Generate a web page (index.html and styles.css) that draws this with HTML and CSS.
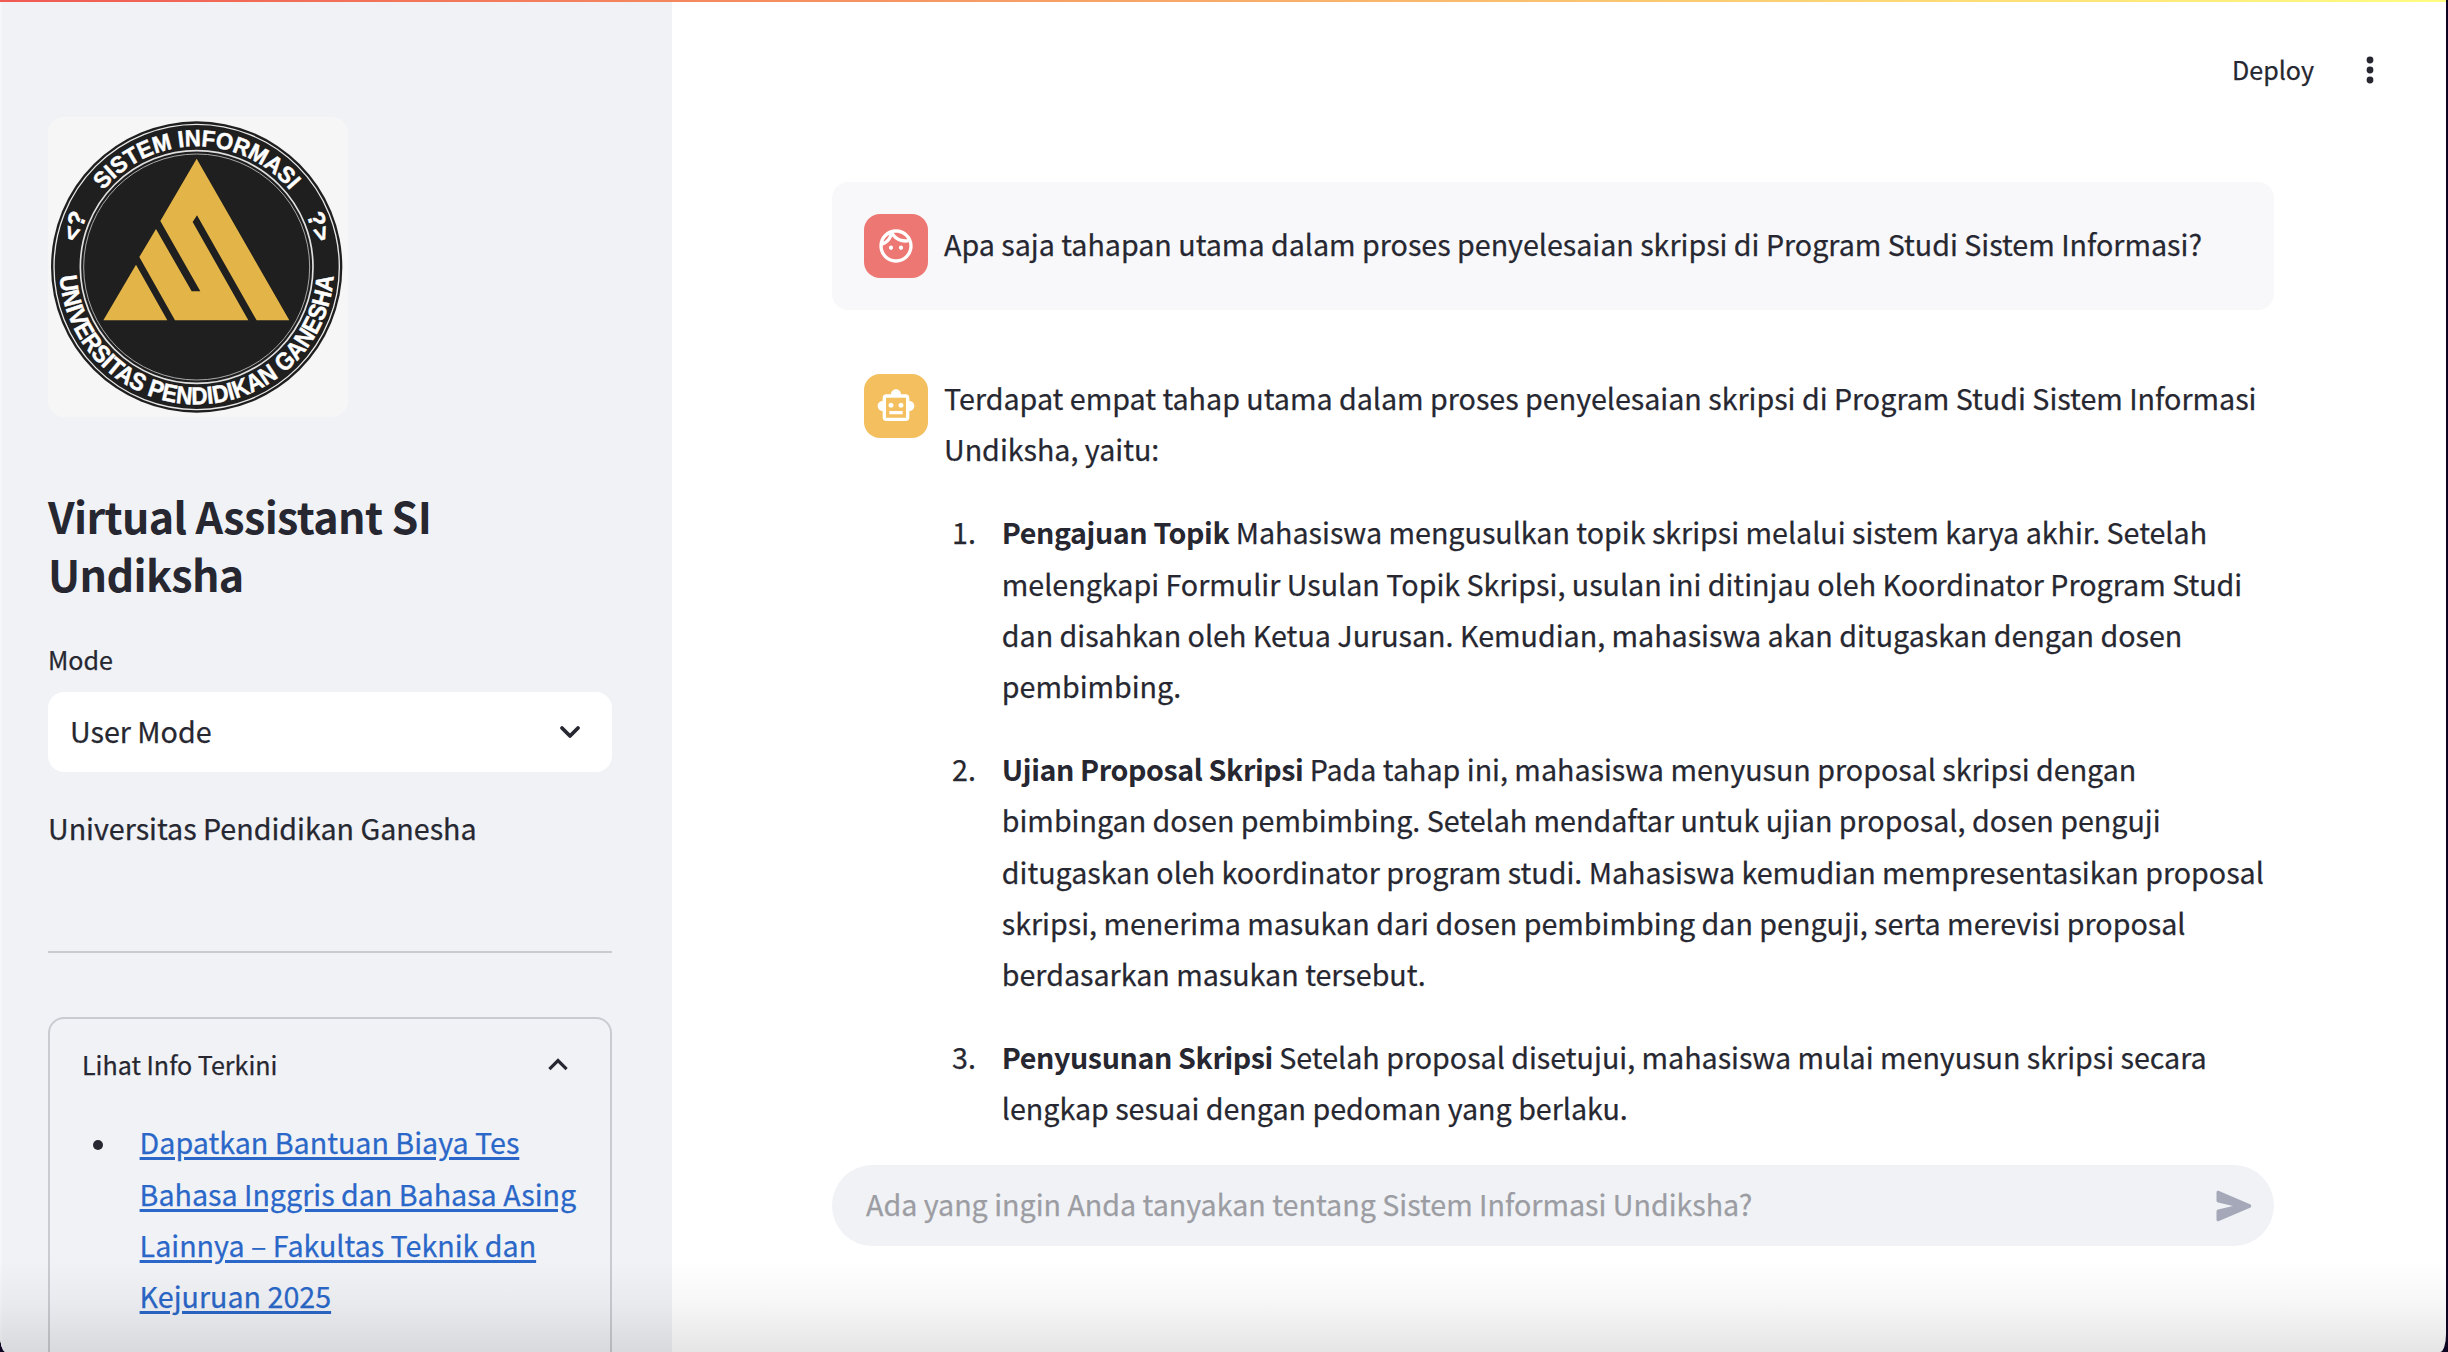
FILE: index.html
```html
<!DOCTYPE html>
<html lang="id">
<head>
<meta charset="utf-8">
<title>Virtual Assistant SI Undiksha</title>
<link rel="stylesheet" href="styles.css">
</head>
<body>
<div class="app">
  <div class="decoration"></div>
  <aside class="sidebar">
    <svg class="logo" viewBox="54 50 900 900">
      <defs>
        <path id="arc-top" d="M138 500 A362 362 0 0 1 862 500"/>
        <path id="arc-bottom" d="M88 500 A412 412 0 0 0 912 500"/>
      </defs>
      <rect x="54" y="50" width="900" height="900" fill="#f6f6f6"/>
      <circle cx="500" cy="500" r="437" fill="#1f1f1f"/>
      <circle cx="500" cy="500" r="428" fill="none" stroke="#e8e8e8" stroke-width="4"/>
      <circle cx="500" cy="500" r="349" fill="none" stroke="#e0e0e0" stroke-width="5"/>
      <circle cx="500" cy="500" r="339" fill="none" stroke="#a8a8a8" stroke-width="3"/>
      <g class="seal-text">
        <text font-size="70"><textPath href="#arc-top" startOffset="50%" text-anchor="middle" textLength="640" lengthAdjust="spacingAndGlyphs">SISTEM INFORMASI</textPath></text>
        <text font-size="74"><textPath href="#arc-bottom" startOffset="50%" text-anchor="middle" textLength="1238" lengthAdjust="spacingAndGlyphs">UNIVERSITAS PENDIDIKAN GANESHA</textPath></text>
        <text font-size="72" letter-spacing="3" text-anchor="middle" transform="rotate(-71.5 500 500)" x="502" y="138">&lt;?</text>
        <text font-size="72" letter-spacing="3" text-anchor="middle" transform="rotate(71.5 500 500)" x="502" y="138">?&gt;</text>
      </g>
      <path fill="#e3b548" d="M500 175 778 660H680L501 345 488 365 655 660H435L328 470 378 386 485 573H511L391 362ZM318 493 412 660H220Z"/>
    </svg>
    <h1 class="title">Virtual Assistant SI<br>Undiksha</h1>
    <label class="label">Mode</label>
    <div class="select">
      <span>User Mode</span>
      <svg class="select-icon" viewBox="0 0 24 16"><path d="M4 4 12 12 20 4" fill="none" stroke="#262730" stroke-width="3.8" stroke-linecap="round" stroke-linejoin="round"/></svg>
    </div>
    <p class="campus">Universitas Pendidikan Ganesha</p>
    <hr class="divider">
    <section class="expander">
      <header class="expander-head">
        <span>Lihat Info Terkini</span>
        <svg class="expander-icon" viewBox="0 0 20 13"><path d="M1.4 11.2 10 2.6 18.6 11.2" fill="none" stroke="#262730" stroke-width="3.2"/></svg>
      </header>
      <ul class="news">
        <li><a href="#">Dapatkan Bantuan Biaya Tes<br>Bahasa Inggris dan Bahasa Asing<br>Lainnya – Fakultas Teknik dan<br>Kejuruan 2025</a></li>
      </ul>
    </section>
  </aside>
  <main class="main">
    <header class="toolbar">
      <span>Deploy</span>
      <svg class="menu-icon" viewBox="0 0 8 28"><circle cx="4" cy="4" r="3.4"/><circle cx="4" cy="14" r="3.4"/><circle cx="4" cy="24" r="3.4"/></svg>
    </header>
    <div class="chat">
      <article class="message user">
        <div class="avatar avatar-user"><svg viewBox="0 0 24 24"><path d="M10.25 13c0 .69-.56 1.25-1.25 1.25S7.75 13.69 7.75 13s.56-1.25 1.25-1.25 1.25.56 1.25 1.25zM15 11.75c-.69 0-1.25.56-1.25 1.25s.56 1.25 1.25 1.25 1.25-.56 1.25-1.25-.56-1.25-1.25-1.25zm7 .25c0 5.52-4.48 10-10 10S2 17.52 2 12 6.48 2 12 2s10 4.48 10 10zM10.66 4.12C12.06 6.44 14.6 8 17.5 8c.46 0 .91-.05 1.34-.12C17.44 5.56 14.9 4 12 4c-.46 0-.91.05-1.34.12zM4.42 9.47a8.046 8.046 0 0 0 3.66-4.44 8.046 8.046 0 0 0-3.66 4.44zM20 12c0-.78-.12-1.53-.33-2.24-.7.15-1.42.24-2.17.24a10 10 0 0 1-7.76-3.69A10.016 10.016 0 0 1 4 11.86c.01.04 0 .09 0 .14 0 4.41 3.59 8 8 8s8-3.59 8-8z"/></svg></div>
        <div class="content"><p>Apa saja tahapan utama dalam proses penyelesaian skripsi di Program Studi Sistem Informasi?</p></div>
      </article>
      <article class="message">
        <div class="avatar avatar-bot"><svg viewBox="0 0 24 24"><path d="M20 9V7c0-1.1-.9-2-2-2h-3c0-1.66-1.34-3-3-3S9 3.34 9 5H6c-1.1 0-2 .9-2 2v2c-1.66 0-3 1.34-3 3s1.34 3 3 3v4c0 1.1.9 2 2 2h12c1.1 0 2-.9 2-2v-4c1.66 0 3-1.34 3-3s-1.34-3-3-3zm-2 10H6V7h12v12zm-9-6c-.83 0-1.5-.67-1.5-1.5S8.17 10 9 10s1.5.67 1.5 1.5S9.83 13 9 13zm7.5-1.5c0 .83-.67 1.5-1.5 1.5s-1.5-.67-1.5-1.5.67-1.5 1.5-1.5 1.5.67 1.5 1.5zM8 15h8v2H8v-2z"/></svg></div>
        <div class="content">
          <p>Terdapat empat tahap utama dalam proses penyelesaian skripsi di Program Studi Sistem Informasi<br>Undiksha, yaitu:</p>
          <ol class="steps">
            <li><span class="num">1.</span><div><strong>Pengajuan Topik</strong> Mahasiswa mengusulkan topik skripsi melalui sistem karya akhir. Setelah<br>melengkapi Formulir Usulan Topik Skripsi, usulan ini ditinjau oleh Koordinator Program Studi<br>dan disahkan oleh Ketua Jurusan. Kemudian, mahasiswa akan ditugaskan dengan dosen<br>pembimbing.</div></li>
            <li><span class="num">2.</span><div><strong>Ujian Proposal Skripsi</strong> Pada tahap ini, mahasiswa menyusun proposal skripsi dengan<br>bimbingan dosen pembimbing. Setelah mendaftar untuk ujian proposal, dosen penguji<br>ditugaskan oleh koordinator program studi. Mahasiswa kemudian mempresentasikan proposal<br>skripsi, menerima masukan dari dosen pembimbing dan penguji, serta merevisi proposal<br>berdasarkan masukan tersebut.</div></li>
            <li><span class="num">3.</span><div><strong>Penyusunan Skripsi</strong> Setelah proposal disetujui, mahasiswa mulai menyusun skripsi secara<br>lengkap sesuai dengan pedoman yang berlaku.</div></li>
          </ol>
        </div>
      </article>
    </div>
    <div class="composer">
      <span>Ada yang ingin Anda tanyakan tentang Sistem Informasi Undiksha?</span>
      <svg class="send-icon" viewBox="0 0 36 32"><path d="M.5 2.6C.5 1 1.6.4 3 1L34 14.2c1.700.8 1.700 2.800 0 3.600L3 31c-1.400.6-2.500 0-2.500-1.600V21.500c0-1 .6-1.700 1.600-1.900L17 16 2.100 12.400C1.100 12.200.5 11.500.5 10.500Z"/></svg>
    </div>
  </main>
  <div class="shade"></div>
</div>
</body>
</html>
```
FILE: styles.css
```css
* { box-sizing: border-box; }

html { background: #0c0420; }

body {
  margin: 0;
  width: 2448px;
  height: 1352px;
  overflow: hidden;
  color: #262730;
  font-family: "Noto Sans CJK SC", "Noto Sans", sans-serif;
  font-size: 28.65px;
  line-height: 51.2px;
  white-space: nowrap;
  -webkit-text-stroke: 0.25px;
}

.app {
  position: relative;
  display: flex;
  width: 2446px;
  height: 1352px;
  overflow: hidden;
  border-radius: 0 0 6px 6px / 0 0 18px 18px;
  background: #fff;
}

.decoration {
  position: absolute;
  inset: 0 0 auto;
  height: 2px;
  background: linear-gradient(90deg, #f05a52, #fffd80);
}

.shade {
  position: absolute;
  inset: auto 0 0;
  height: 92px;
  background: linear-gradient(rgba(0, 0, 0, 0), rgba(0, 0, 0, 0.03) 45%, rgba(0, 0, 0, 0.1));
}

.sidebar {
  width: 672px;
  flex: none;
  padding: 117px 60px 0 46px;
  border-left: 2px solid #f5f6f9;
  background: #f0f2f6;
}

.logo {
  display: block;
  width: 300px;
  height: 300px;
  border-radius: 16px;
}

.seal-text {
  fill: #fff;
  stroke: #fff;
  stroke-width: 1.5px;
  font-family: "Liberation Sans", Arial, sans-serif;
  font-weight: 700;
  -webkit-text-stroke: 0;
}

.title {
  margin: 70px 0 0;
  font-size: 43px;
  line-height: 57.6px;
  font-weight: 700;
  letter-spacing: -0.63px;
  -webkit-text-stroke: 0;
}

.label {
  display: block;
  margin-top: 37px;
  font-size: 25.07px;
  line-height: 40px;
}

.select {
  display: flex;
  align-items: center;
  justify-content: space-between;
  height: 80px;
  margin-top: 12.8px;
  padding: 0 30px 0 22px;
  border-radius: 16px;
  background: #fff;
}

.select span { margin-top: -2px; }
.select-icon { width: 24px; height: 16px; }

.campus { margin: 30px 0 0; }

.divider {
  height: 2px;
  margin: 98px 0 64px;
  border: 0;
  background: #c9cbd0;
}

.expander {
  height: 400px;
  padding: 0 32px;
  border: 2px solid #c9cbd0;
  border-radius: 16px;
}

.expander-head {
  display: flex;
  align-items: center;
  justify-content: space-between;
  padding: 20px 10px 0 0;
  font-size: 25.07px;
}

.expander-icon { width: 20px; height: 13px; }

.news {
  margin: 26px 0 0;
  padding: 0;
  list-style: none;
}

.news li { display: flex; }

.news li::before {
  content: "";
  width: 10px;
  height: 10px;
  margin: 24px 36.6px 0 11px;
  border-radius: 50%;
  background: #262730;
}

.news a {
  color: #2a67c8;
  text-decoration-thickness: 2.5px;
  text-underline-offset: 3px;
}

.main {
  flex: 1;
  min-width: 0;
  padding-right: 172px;
  padding-left: 160px;
}

.toolbar {
  display: flex;
  align-items: center;
  justify-content: flex-end;
  gap: 52px;
  height: 140px;
  margin-right: -100px;
  font-size: 25.07px;
}

.menu-icon { width: 8px; height: 28px; fill: #262730; }

.chat {
  height: 1025px;
  padding-top: 42px;
  overflow: hidden;
}

.message {
  display: flex;
  gap: 16px;
  padding: 32px;
}

.message.user {
  height: 128px;
  margin-bottom: 32px;
  border-radius: 16px;
  background: #f8f8fb;
}

.user .content { padding-top: 6px; }

.avatar {
  display: flex;
  align-items: center;
  justify-content: center;
  width: 64px;
  height: 64px;
  flex: none;
  border-radius: 16px;
}

.avatar svg { width: 40px; height: 40px; fill: #fff; }
.avatar-user { background: #ed7772; }
.avatar-bot { background: #f4bf5f; }

.content { margin-top: -2px; min-width: 0; }
.content p { margin: 0 0 32px; }

.steps {
  margin: 0;
  padding: 0;
  list-style: none;
}

.steps li {
  display: flex;
  margin-bottom: 32px;
}

.steps strong {
  letter-spacing: -0.4px;
  -webkit-text-stroke: 0;
}

.num { width: 57.8px; padding-left: 8px; flex: none; }

.composer {
  display: flex;
  align-items: center;
  justify-content: space-between;
  height: 81px;
  padding: 0 22px 0 34px;
  border-radius: 41px;
  background: #f0f2f6;
  color: #9c9da3;
}

.composer span { margin-top: -4px; }

.send-icon { width: 36px; height: 32px; fill: #a5a8b8; }
```
